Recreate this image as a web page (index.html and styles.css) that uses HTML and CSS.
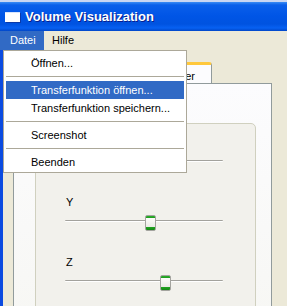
FILE: index.html
```html
<!DOCTYPE html>
<html>

<head>
    <meta charset="UTF-8">
    <title>Volume Visualization</title>
    <link rel="stylesheet" href="styles.css">
</head>
<body>
    <div class="window">
        <div class="titlebar">
            <span class="app-icon"></span>
            <span class="title">Volume Visualization</span>
        </div>
        <div class="menubar">
            <span class="menu-item active">Datei</span>
            <span class="menu-item">Hilfe</span>
        </div>
        <div class="client">
            <div class="tabs">
                <div class="tab"></div>
                <div class="tab selected">Schieberegler</div>
            </div>
            <div class="pane">
                <div class="groupbox">
                    <div class="slider">
                        <div class="label"></div>
                        <div class="track"><span class="thumb" style="left: 80px"></span></div>
                    </div>
                    <div class="slider">
                        <div class="label">Y</div>
                        <div class="track"><span class="thumb" style="left: 80px"></span></div>
                    </div>
                    <div class="slider">
                        <div class="label">Z</div>
                        <div class="track"><span class="thumb" style="left: 95px"></span></div>
                    </div>
                </div>
            </div>
        </div>

        <div class="dropdown">
            <div class="entry">Öffnen...</div>
            <div class="sep"></div>
            <div class="entry hover">Transferfunktion öffnen...</div>
            <div class="entry">Transferfunktion speichern...</div>
            <div class="sep"></div>
            <div class="entry">Screenshot</div>
            <div class="sep"></div>
            <div class="entry">Beenden</div>
        </div>
    </div>
</body>

</html>
```

FILE: styles.css
```css
body {
    margin: 0;
    width: 287px;
    height: 306px;
    overflow: hidden;
    font-family: "Liberation Sans", Arial, sans-serif;
    font-size: 11px;
    color: #000;
    background: #ECE9D8;
}

.window {
    position: relative;
    height: 306px;
    overflow: hidden;
}

/* title bar */
.titlebar {
    height: 29px;
    border-top: 2px solid #C9D6F2;
    display: flex;
    align-items: center;
    gap: 5px;
    padding-left: 5px;
    background: linear-gradient(#3A8CF4 0, #0A5FEA 3px, #0055E6 14px, #0053E0 22px, #0761F2 26px, #0046C8 29px);
}

.app-icon {
    width: 15px;
    height: 9px;
    margin-top: 1px;
    background: #fff;
    border-top: 1px solid #d8e4fb;
    box-shadow: 1px 1px 0 #0B3AA8;
}

.title {
    color: #fff;
    font-weight: bold;
    font-size: 13px;
    text-shadow: 1px 1px 0 #0A1E8C;
}

/* menu bar */
.menubar {
    height: 19px;
    display: flex;
    background: #ECE9D8;
}

.menu-item {
    line-height: 19px;
    padding: 0 8px;
}

.menu-item.active {
    width: 25px;
    padding: 0 9px 0 10px;
    background: #316AC5;
    color: #fff;
}

/* window content */
.client {
    height: 244px;
    overflow: hidden;
    border-left: 3px solid #0B4BE0;
    padding: 12px 15px 0 10px;
    background: #ECE9D8;
}

.tabs {
    display: flex;
    height: 21px;
    padding-left: 2px;
}

.tab {
    width: 70px;
    height: 18px;
    margin-top: 3px;
    line-height: 18px;
    text-align: center;
    border: 1px solid #919B9C;
    border-bottom: none;
    border-radius: 3px 3px 0 0;
    background: linear-gradient(#FEFEFE, #ECEBE6);
}

.tab.selected {
    width: 107px;
    height: 18px;
    margin-top: 0;
    padding-right: 16px;
    text-align: right;
    line-height: 22px;
    white-space: nowrap;
    overflow: hidden;
    border-top: 3px solid #FFC83C;
    background: #FCFCFE;
    position: relative;
    z-index: 1;
    margin-bottom: -1px;
}

.pane {
    height: 200px;
    border: 1px solid #919B9C;
    border-bottom: none;
    padding: 39px 15px 0 21px;
    background: linear-gradient(#FCFCFE, #F7F7F4);
}

.groupbox {
    height: 190px;
    border: 1px solid #D0D0BF;
    border-radius: 5px;
    padding: 11px 0 0 29px;
    background: #F2F1EC;
}

.slider {
    margin-bottom: 33px;
}

.label {
    height: 14px;
    line-height: 14px;
    margin-bottom: 11px;
    padding-left: 1px;
}

.track {
    position: relative;
    width: 158px;
    height: 1px;
    border-top: 1px solid #A3A29D;
    background: #fff;
    border-radius: 1px;
}

.thumb {
    position: absolute;
    top: -6px;
    width: 9px;
    height: 14px;
    border: 1px solid #A4A49F;
    border-radius: 2px;
    background: linear-gradient(#2AB02A 0, #1F9A1F 2px, #FDFDFB 2px, #EAEAE4 11px, #1FA51F 11px, #158715 14px);
}

/* dropdown menu */
.dropdown {
    position: absolute;
    z-index: 5;
    left: 3px;
    top: 50px;
    width: 182px;
    padding: 3px 0 1px;
    border: 1px solid #ACA899;
    background: #fff;
}

.entry {
    height: 18px;
    line-height: 18px;
    margin: 0 2px;
    padding-left: 25px;
    white-space: nowrap;
}

.entry.hover {
    background: #316AC5;
    color: #fff;
}

.sep {
    height: 0;
    margin: 4px 2px;
    border-top: 1px solid #ACA899;
}
```
